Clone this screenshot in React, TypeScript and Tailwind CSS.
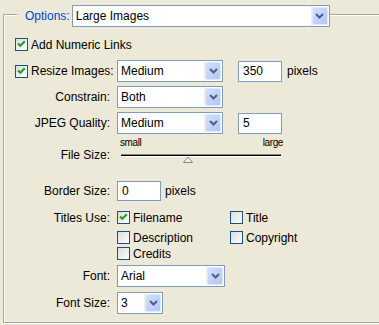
import React from "react";

function Chevron() {
  return (
    <svg width="9" height="6" viewBox="0 0 9 6">
      <path d="M1 1 L4.5 4.5 L8 1" fill="none" stroke="#4D6185" strokeWidth="2" />
    </svg>
  );
}

function Select({ value, className }: { value: string; className: string }) {
  return (
    <div className={`flex h-[22px] items-stretch border border-[#7F9DB9] bg-white ${className}`}>
      <div className="flex flex-1 items-center border-r border-[#F1EFE2] pl-[3px]">{value}</div>
      <div className="my-[1px] mr-[1px] flex w-[16px] items-center justify-center rounded-[2px] border border-[#E0E8FD] bg-linear-to-br from-[#D2DFFD] to-[#B2C7F7]">
        <Chevron />
      </div>
    </div>
  );
}

function TextBox({ value, className }: { value: string; className: string }) {
  return (
    <div className={`flex w-[44px] items-center border border-[#7F9DB9] bg-white pl-[4px] ${className}`}>{value}</div>
  );
}

function Check({ checked }: { checked?: boolean }) {
  return (
    <span className="flex h-[13px] w-[13px] shrink-0 items-center justify-center border border-[#1C5180] bg-linear-to-br from-[#DCDCD7] to-white">
      {checked && (
        <svg width="11" height="11" viewBox="0 0 11 11">
          <path d="M2 4.5 L4.3 6.8 L8.8 2.3" fill="none" stroke="#21A121" strokeWidth="2.2" />
        </svg>
      )}
    </span>
  );
}

function CheckLabel({ label, checked }: { label: string; checked?: boolean }) {
  return (
    <div className="flex h-[13px] items-center">
      <Check checked={checked} />
      <span className="ml-[3px]">{label}</span>
    </div>
  );
}

function Label({ text }: { text: string }) {
  return <div className="w-[106px] text-right">{text}</div>;
}

export default function App() {
  return (
    <div className="h-[325px] w-[379px] overflow-hidden bg-[#ECE9D8] pl-[3px] pt-[14px] font-['Liberation_Sans',Arial,sans-serif] text-[12px] leading-[14px] text-black">
      <div className="flex h-[309px] w-[420px] flex-col border border-[#ACA899] shadow-[inset_1px_1px_0_#fff,0_1px_0_#fff]">
        {/* header */}
        <div className="-mt-[10px] ml-[13px] flex h-[22px] items-center self-start bg-[#ECE9D8]">
          <span className="pl-[8px] text-[#0046D5]">Options:</span>
          <Select value="Large Images" className="ml-[2px] w-[258px]" />
        </div>

        {/* Add numeric links */}
        <div className="mt-[11px] flex h-[13px] items-center pl-[11px]">
          <CheckLabel label="Add Numeric Links" checked />
        </div>

        {/* Resize images */}
        <div className="mt-[9px] flex h-[22px] items-center">
          <div className="flex w-[113px] items-center pl-[11px]">
            <CheckLabel label="Resize Images:" checked />
          </div>
          <Select value="Medium" className="w-[106px]" />
          <TextBox value="350" className="ml-[15px] h-[21px]" />
          <span className="ml-[5px]">pixels</span>
        </div>

        {/* Constrain */}
        <div className="mt-[4px] flex h-[22px] items-center">
          <Label text="Constrain:" />
          <Select value="Both" className="ml-[7px] w-[106px]" />
        </div>

        {/* JPEG quality */}
        <div className="mt-[4px] flex h-[22px] items-center">
          <Label text="JPEG Quality:" />
          <Select value="Medium" className="ml-[7px] w-[106px]" />
          <TextBox value="5" className="ml-[15px] h-[21px]" />
        </div>

        {/* File size slider */}
        <div className="mt-[4px] flex h-[25px] items-start">
          <div className="mt-[10px] w-[106px] text-right">File Size:</div>
          <div className="ml-[10px] flex w-[163px] flex-col">
            <div className="flex h-[10px] justify-between text-[10px] leading-[10px] tracking-[-0.4px]">
              <span>small</span>
              <span>large</span>
            </div>
            <div className="relative ml-[1px] mt-[6px] w-[160px]">
              <div className="h-[1px] bg-[#8A887C]" />
              <div className="h-[1px] bg-black" />
              <div className="h-[1px] bg-white" />
              <svg className="absolute left-[62px] top-[2px]" width="10" height="7" viewBox="0 0 10 7">
                <polygon points="0.5,6.5 5,1 9.5,6.5" fill="#F4F3EE" stroke="#8A887C" strokeWidth="1" />
              </svg>
            </div>
          </div>
        </div>

        {/* Border size */}
        <div className="mt-[18px] flex h-[20px] items-center">
          <Label text="Border Size:" />
          <TextBox value="0" className="ml-[7px] h-[20px]" />
          <span className="ml-[4px]">pixels</span>
        </div>

        {/* Titles use */}
        <div className="mt-[10px] flex items-start">
          <div className="flex h-[13px] w-[106px] items-center justify-end">Titles Use:</div>
          <div className="ml-[7px] flex flex-col">
            <div className="flex">
              <div className="w-[113px]">
                <CheckLabel label="Filename" checked />
              </div>
              <CheckLabel label="Title" />
            </div>
            <div className="mt-[7px] flex">
              <div className="w-[113px]">
                <CheckLabel label="Description" />
              </div>
              <CheckLabel label="Copyright" />
            </div>
            <div className="mt-[3px] flex">
              <CheckLabel label="Credits" />
            </div>
          </div>
        </div>

        {/* Font */}
        <div className="mt-[5px] flex h-[22px] items-center">
          <Label text="Font:" />
          <Select value="Arial" className="ml-[7px] w-[108px]" />
        </div>

        {/* Font size */}
        <div className="mt-[5px] flex h-[22px] items-center">
          <Label text="Font Size:" />
          <Select value="3" className="ml-[7px] w-[46px]" />
        </div>
      </div>
    </div>
  );
}
